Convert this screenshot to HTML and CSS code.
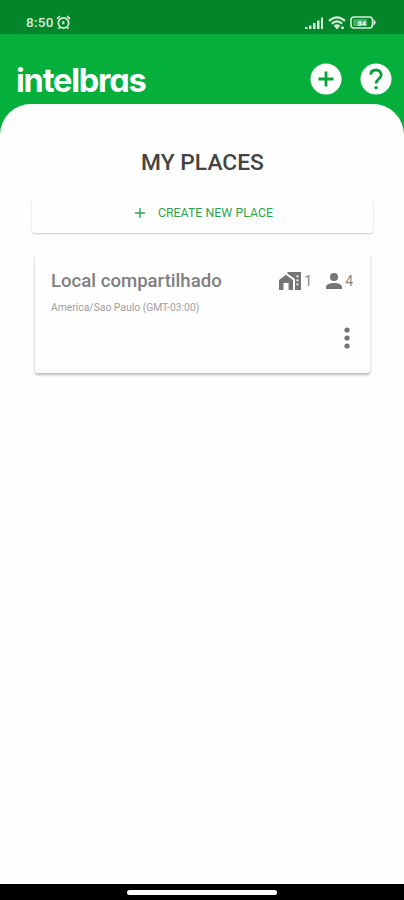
FILE: index.html
```
<!DOCTYPE html>
<html lang="en">
<head>
<meta charset="utf-8">
<title>My places</title>
<link rel="stylesheet" href="styles.css">
</head>
<body>
<div class="status">
  <span class="time">8:50</span>
  <svg class="alarm" width="15" height="15" viewBox="0 0 15 15" fill="none" stroke="currentColor" stroke-width="1.700"><circle cx="7.5" cy="8" r="5.2"/><path d="M1 3.8 4 1M14 3.8 11 1M3.8 12.2 2.6 13.8M11.2 12.2l1.2 1.6M7.500 6v2.500H6"/></svg>
  <div class="indicators">
    <svg width="20" height="12" viewBox="0 0 20 12" fill="currentColor"><path d="M1 10h2.500v2H1zM5 8.500h2.500V12H5zM9 6h2.500v6H9zM13 3.500h2.500V12H13zM17 .5h2V12h-2z"/></svg>
    <svg width="18" height="14" viewBox="0 0 18 14" fill="none" stroke="currentColor" stroke-width="2.200"><path d="M1 4.900Q9-2.300 17 4.900M3.800 7.800Q9 3 14.200 7.800M6.400 10.300Q9 8.300 11.600 10.300"/><path d="M7.300 10.800h3.400L9 13z" stroke-width="1" fill="currentColor"/><circle cx="14.500" cy="11.800" r="1.500" fill="currentColor" stroke="none"/></svg>
    <svg width="27" height="13" viewBox="0 0 27 13"><rect x="1" y="1" width="21.500" height="11" rx="3" fill="none" stroke="currentColor" stroke-width="1.600"/><path d="M23.500 3.500q4.500 3 0 6z" fill="currentColor"/><rect x="3.200" y="3" width="14" height="7" rx="1" fill="currentColor" opacity=".35"/><text class="charge" x="11.700" y="9.500" text-anchor="middle">84</text></svg>
  </div>
</div>
<header class="bar">
  <div class="logo">intelbras</div>
  <svg class="action" width="32" height="32" viewBox="0 0 32 32"><circle class="disc" cx="16" cy="16" r="15.500"/><path class="mark" d="M8.500 16h15M16 8.500v15"/></svg>
  <svg class="action" width="32" height="32" viewBox="0 0 32 32"><circle class="disc" cx="16" cy="16" r="15.500"/><path class="mark" d="M10.800 11.800C10.800 8.700 13 7 16 7s5.200 2 5.200 4.900c0 3.600-5.100 4.100-5.100 8.500"/><circle class="dot" cx="16.100" cy="24.800" r="1.700"/></svg>
</header>
<main class="sheet">
  <h1>MY PLACES</h1>
  <div class="create"><svg width="10" height="10" viewBox="0 0 10 10"><path d="M0 5h10M5 0v10" stroke="currentColor" stroke-width="1.400"/></svg><span>CREATE NEW PLACE</span></div>
  <section class="card">
    <div class="top">
      <h2>Local compartilhado</h2>
      <svg class="rooms" width="22" height="18" viewBox="0 0 22 18" fill="currentColor"><path d="M0 8 7 2.700 14 8v10H9.600v-7H4.500v7H0z"/><path fill-rule="evenodd" d="M8.500 0H22v18h-6V7L8.500 1.800zM17.500 3.500v1.800h2V3.500zm0 4v1.800h2V7.500zm0 4v1.800h2v-1.800z"/></svg>
      <span class="count">1</span>
      <svg class="people" width="16" height="16" viewBox="0 0 16 16" fill="currentColor"><circle cx="8" cy="4" r="4"/><path d="M0 16v-2c0-2.700 4.500-4 8-4s8 1.300 8 4v2z"/></svg>
      <span class="count">4</span>
    </div>
    <p>America/Sao Paulo (GMT-03:00)</p>
    <svg class="more" width="6" height="22" viewBox="0 0 6 22" fill="currentColor"><circle cx="3" cy="3" r="2.600"/><circle cx="3" cy="11" r="2.600"/><circle cx="3" cy="19" r="2.600"/></svg>
  </section>
</main>
<footer class="nav"><div class="handle"></div></footer>
</body>
</html>
```
FILE: styles.css
```
* { box-sizing: border-box; }
body {
  margin: 0;
  height: 900px;
  display: flex;
  flex-direction: column;
  overflow: hidden;
  background: #04b03b;
  font-family: Roboto, "Liberation Sans", sans-serif;
}
svg { display: block; flex: none; }
.status {
  height: 34px;
  display: flex;
  align-items: center;
  padding: 11px 27px 0 26px;
  background: #048529;
  color: #d5f0d9;
}
.time { font-size: 13.5px; line-height: 15px; font-weight: 500; letter-spacing: .3px; }
.alarm { margin-left: 2px; margin-top: -1px; }
.indicators { margin-left: auto; display: flex; align-items: center; gap: 4px; }
.charge { font: 700 7.5px Roboto, sans-serif; fill: #f0fff1; }
.bar {
  height: 70px;
  display: flex;
  padding: 29px 12px 0 16px;
}
.logo {
  margin-top: -2px;
  margin-right: auto;
  height: 40px;
  line-height: 40px;
  font-family: Inter, Lato, sans-serif;
  font-size: 32.5px;
  font-weight: 700;
  letter-spacing: -1.2px;
  font-feature-settings: "cv11";
  color: #fff;
}
.action { margin-left: 18px; }
.disc { fill: #fff; }
.mark { fill: none; stroke: #04a43a; stroke-width: 2.8; }
.dot { fill: #04a43a; }
.sheet {
  flex: 1;
  background: #fefefe;
  border-radius: 31px 31px 0 0;
  padding: 43px 31px 0 32px;
}
h1 {
  margin: 0;
  text-align: center;
  font-size: 22.8px;
  line-height: 31px;
  font-weight: 500;
  color: #444;
}
.create {
  margin-top: 19px;
  height: 36px;
  display: flex;
  align-items: center;
  justify-content: center;
  gap: 13px;
  padding: 0 0 5px 3px;
  border-radius: 3px;
  background: #fefefe;
  box-shadow: 0 1px 2px rgba(0, 0, 0, .2);
  clip-path: inset(0 -4px -5px -4px);
  font-size: 12.4px;
  color: #2aa653;
}
.card {
  margin: 20px 3px 0 3px;
  height: 120px;
  padding: 16px 17px 0 16px;
  border-radius: 3px;
  background: #fefefe;
  box-shadow: 0 2px 3px rgba(0, 0, 0, .28);
  clip-path: inset(0 -4px -7px -4px);
  color: #757575;
}
.top { display: flex; align-items: center; height: 23px; }
h2 { margin: 0 auto 0 0; font-size: 18.6px; line-height: 22px; font-weight: 500; color: #808080; }
.count { font-size: 14px; line-height: 20px; color: #888; }
.rooms + .count { margin-left: 3px; }
.people { margin-left: 14px; margin-right: 3px; }
p { margin: 10px 0 0; font-size: 10.35px; line-height: 12px; color: #a0a0a0; }
.more { margin: 13px 3px 0 auto; }
.nav { height: 16px; background: #000; display: flex; justify-content: center; padding-top: 6px; }
.handle { width: 150px; height: 5px; border-radius: 3px; background: #fff; }
```
